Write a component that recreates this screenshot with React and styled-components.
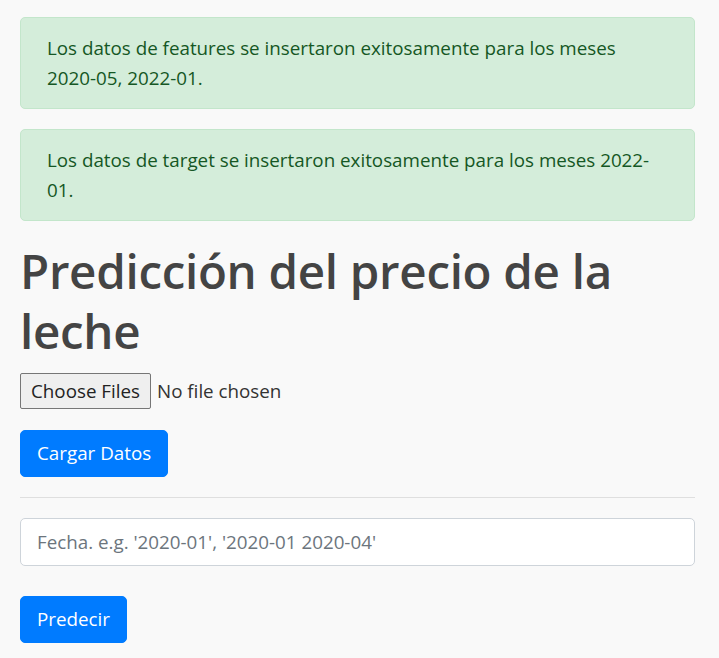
import React, {useState} from 'react'
import styled, {createGlobalStyle} from 'styled-components'

const GlobalStyle = createGlobalStyle`
	body {
		margin: 0;
		background: #f9f9f9;
		font-family: "Open Sans", "Noto Sans", sans-serif;
		color: #333;
	}
`

const Container = styled.div`
	padding: 17px 24px 20px 20px;
	display: flex;
	flex-direction: column;
`

const Alert = styled.div`
	background: #d4edda;
	border: 1px solid #c3e6cb;
	color: #155724;
	border-radius: 5px;
	padding: 15px 26px;
	margin-bottom: 20px;
	font-size: 18.8px;
	line-height: 30px;
`

const Title = styled.h1`
	margin: 0 0 12px;
	font-size: 47.5px;
	line-height: 60px;
	font-weight: 600;
	color: #444;
	letter-spacing: -0.3px;
`

const FileInput = styled.input`
	font-family: inherit;
	font-size: 18.8px;
	color: #333;
	height: 36px;
	&::file-selector-button {
		font-family: inherit;
		font-size: 18.8px;
		height: 36px;
		padding: 0 10px;
		margin-right: 6px;
		background: #efefef;
		color: #222;
		border: 1px solid #767676;
		border-radius: 2px;
	}
`

const Button = styled.button`
	align-self: flex-start;
	background: #007bff;
	color: #fff;
	border: 1px solid #007bff;
	border-radius: 5px;
	padding: 7px 16px;
	font-family: inherit;
	font-size: 18.8px;
	line-height: 31px;
	margin-top: ${p => p.top || 0}px;
	cursor: pointer;
`

const Divider = styled.hr`
	width: 100%;
	margin: 20px 0;
	border: 0;
	border-top: 1px solid rgba(0, 0, 0, 0.1);
`

const TextInput = styled.input`
	box-sizing: border-box;
	width: 100%;
	height: 48px;
	padding: 7px 16px;
	font-family: inherit;
	font-size: 18.8px;
	color: #495057;
	background: #fff;
	border: 1px solid #ced4da;
	border-radius: 5px;
	&::placeholder { color: #6c757d; }
`

function App() {
	const [fecha, setFecha] = useState('')

	return (
		<>
			<GlobalStyle/>
			<Container>
				<Alert>Los datos de features se insertaron exitosamente para los meses 2020-05, 2022-01.</Alert>
				<Alert>Los datos de target se insertaron exitosamente para los meses 2022-01.</Alert>
				<Title>Predicción del precio de la leche</Title>
				<div><FileInput type="file" multiple/></div>
				<Button top={21}>Cargar Datos</Button>
				<Divider/>
				<TextInput type="text" placeholder="Fecha. e.g. '2020-01', '2020-01 2020-04'"
					value={fecha} onChange={(e) => setFecha(e.target.value)}/>
				<Button top={30}>Predecir</Button>
			</Container>
		</>
	)
}

export default App
